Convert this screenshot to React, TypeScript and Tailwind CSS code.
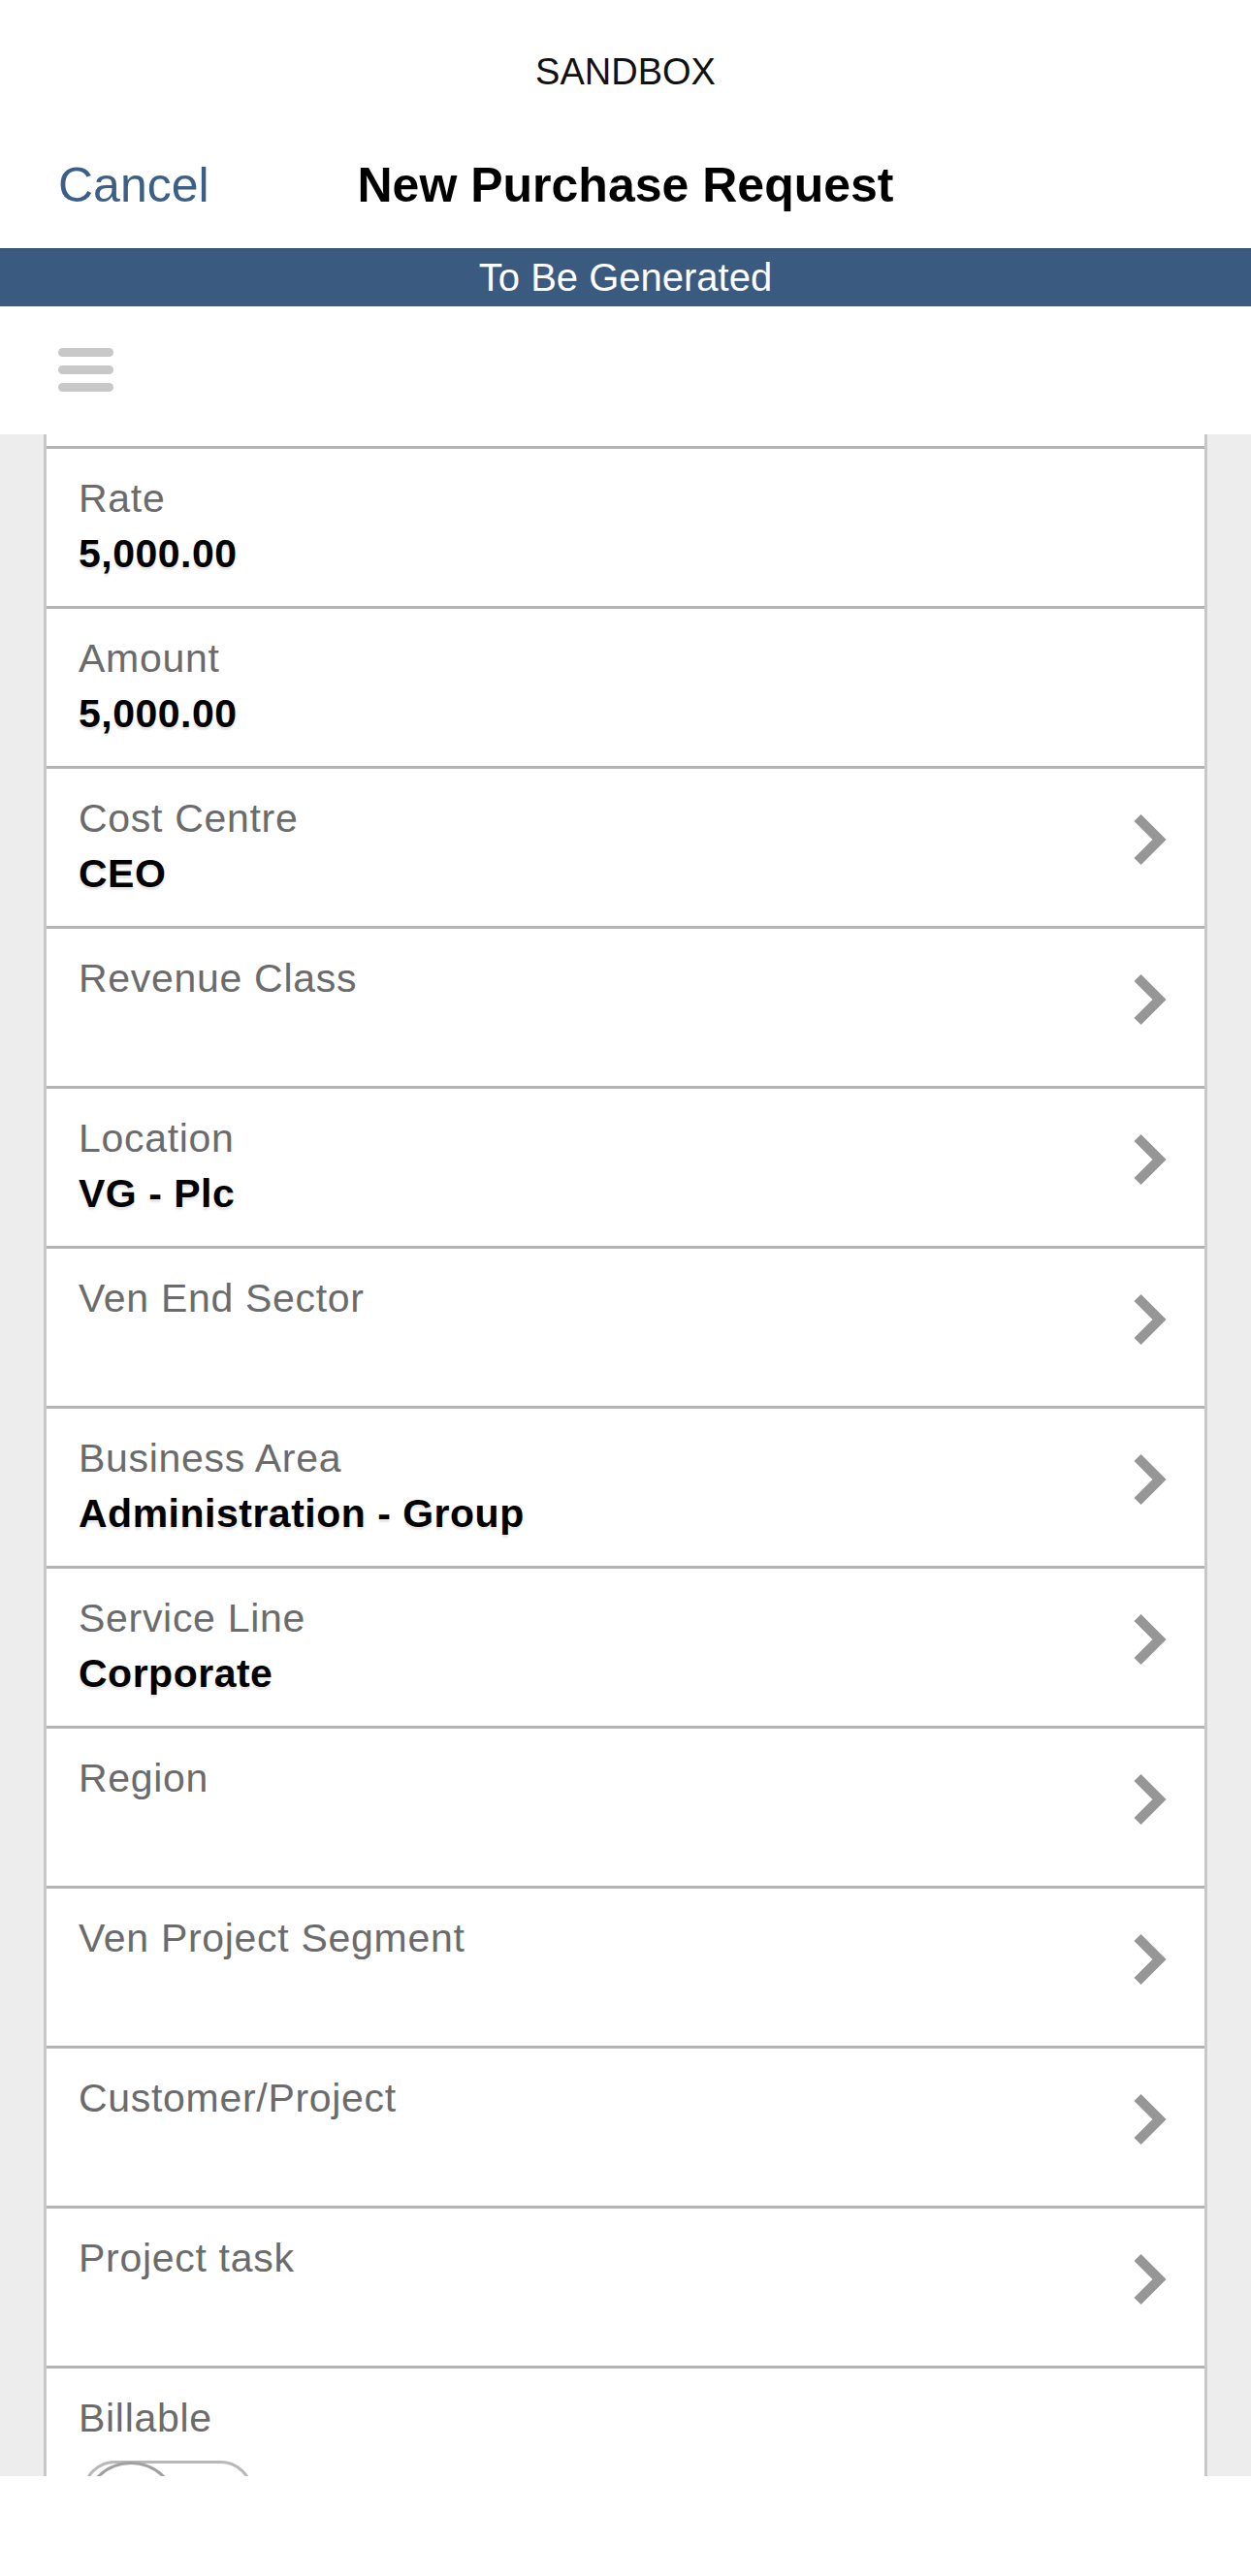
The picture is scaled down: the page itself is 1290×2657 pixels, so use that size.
import React from "react";

type Row = { label: string; value?: string; chevron?: boolean; toggle?: boolean };

const rows: Row[] = [
  { label: "Rate", value: "5,000.00" },
  { label: "Amount", value: "5,000.00" },
  { label: "Cost Centre", value: "CEO", chevron: true },
  { label: "Revenue Class", chevron: true },
  { label: "Location", value: "VG - Plc", chevron: true },
  { label: "Ven End Sector", chevron: true },
  { label: "Business Area", value: "Administration - Group", chevron: true },
  { label: "Service Line", value: "Corporate", chevron: true },
  { label: "Region", chevron: true },
  { label: "Ven Project Segment", chevron: true },
  { label: "Customer/Project", chevron: true },
  { label: "Project task", chevron: true },
  { label: "Billable", toggle: true },
];

function Chevron() {
  return (
    <svg width="34" height="52" viewBox="0 0 34 52" className="block">
      <polyline
        points="4,3.5 26.5,26 4,48.5"
        fill="none"
        stroke="#969696"
        strokeWidth="10"
        strokeLinejoin="miter"
        strokeLinecap="butt"
      />
    </svg>
  );
}

function FieldRow({ row }: { row: Row }) {
  return (
    <div className="h-[165px] shrink-0 border-t-[3px] border-[#b4b4b4] flex justify-between pl-[33px] pr-[39px] pt-[27px]">
      <div className="flex flex-col">
        <div className="text-[41px] leading-[48px] tracking-[0.7px] text-[#6b6b6b]">{row.label}</div>
        {row.value && (
          <div className="mt-[9px] text-[41px] leading-[48px] tracking-[0.5px] font-bold text-black [text-shadow:0_3px_2px_rgba(0,0,0,0.10)]">
            {row.value}
          </div>
        )}
        {row.toggle && (
          <div className="mt-[20px] ml-[4px] relative w-[176px] h-[100px] rounded-full border-[3px] border-[#b8b8b8] bg-white">
            <div className="absolute left-[-2px] top-[-2px] w-[98px] h-[98px] rounded-full border-[3px] border-[#a0a0a0] bg-white" />
          </div>
        )}
      </div>
      {row.chevron && (
        <div className="self-start mt-[20px]">
          <Chevron />
        </div>
      )}
    </div>
  );
}

export default function App() {
  return (
    <div
      className="w-[1290px] h-[2657px] flex flex-col bg-white overflow-hidden"
      style={{ fontFamily: '"Liberation Sans", Arial, Helvetica, sans-serif' }}
    >
      {/* Header */}
      <div className="h-[448px] shrink-0 flex flex-col bg-white">
        <div className="h-[130px] shrink-0 pt-[53px] text-center text-[38px] leading-[42px] text-[#111]">
          SANDBOX
        </div>
        <div className="h-[126px] shrink-0 pt-[32px] grid grid-cols-[1fr_auto_1fr] items-start">
          <div className="pl-[60px] text-[50px] leading-[58px] text-[#3c5f88]">Cancel</div>
          <div className="text-[50px] leading-[58px] font-bold text-black">New Purchase Request</div>
          <div />
        </div>
        <div className="h-[60px] shrink-0 bg-[#3a5a7f] border-t border-[#2c4665] text-center text-white text-[40px] leading-[58px]">
          To Be Generated
        </div>
        <div className="flex-1 pl-[60px] pt-[43px]">
          <div className="flex flex-col gap-[9px] w-[57px]">
            <div className="h-[9px] rounded-[5px] bg-[#c8c8c8]" />
            <div className="h-[9px] rounded-[5px] bg-[#c8c8c8]" />
            <div className="h-[9px] rounded-[5px] bg-[#c8c8c8]" />
          </div>
        </div>
      </div>

      {/* Scroll content */}
      <div className="h-[2106px] shrink-0 bg-[#ededed] overflow-hidden px-[45px]">
        <div className="h-full bg-white border-x-[3px] border-[#c8c8c8] flex flex-col pt-[12px] overflow-hidden">
          {rows.map((r) => (
            <FieldRow key={r.label} row={r} />
          ))}
        </div>
      </div>

      {/* Bottom white area */}
      <div className="flex-1 bg-white" />
    </div>
  );
}
